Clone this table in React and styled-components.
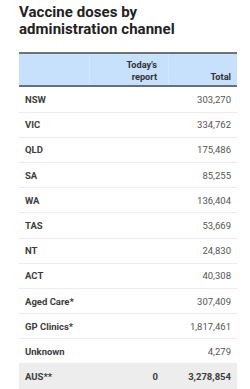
import React from 'react';
import styled, { createGlobalStyle } from 'styled-components';

const GlobalStyle = createGlobalStyle`
  html, body {
    margin: 0;
    padding: 0;
    background: #ffffff;
    font-family: Roboto, "Liberation Sans", sans-serif;
  }
`;

const rows = [
  { label: 'NSW', today: '', total: '303,270' },
  { label: 'VIC', today: '', total: '334,762' },
  { label: 'QLD', today: '', total: '175,486' },
  { label: 'SA', today: '', total: '85,255' },
  { label: 'WA', today: '', total: '136,404' },
  { label: 'TAS', today: '', total: '53,669' },
  { label: 'NT', today: '', total: '24,830' },
  { label: 'ACT', today: '', total: '40,308' },
  { label: 'Aged Care*', today: '', total: '307,409' },
  { label: 'GP Clinics*', today: '', total: '1,817,461' },
  { label: 'Unknown', today: '', total: '4,279' },
];

const Page = styled.div`
  width: 250px;
  height: 389px;
  overflow: hidden;
  padding: 4px 13px 0 19px;
  box-sizing: border-box;
`;

const Title = styled.h2`
  margin: 0 0 15px 0;
  font-size: 15px;
  line-height: 16.7px;
  font-weight: 700;
  color: #222;
  letter-spacing: 0.05px;
`;

const Table = styled.div`
  display: flex;
  flex-direction: column;
  width: 218px;
`;

const HeaderRow = styled.div`
  display: grid;
  grid-template-columns: 71px 79px 68px;
  height: 35px;
  box-sizing: border-box;
  border-top: 2px solid #6f7378;
  border-bottom: 2px solid #66707a;
  background: #c7e1fc;
`;

const HeadCell = styled.div`
  display: flex;
  align-items: flex-end;
  justify-content: flex-end;
  text-align: right;
  padding: 0 ${p => p.$pr || 6}px 3px 6px;
  font-size: 9.2px;
  line-height: 11.5px;
  font-weight: 700;
  color: #333;
  border-right: ${p => (p.$last ? 'none' : '1px solid #d3e7fc')};
`;

const Row = styled.div`
  display: grid;
  grid-template-columns: 71px 79px 68px;
  align-items: center;
  height: 25.2px;
  box-sizing: border-box;
  border-bottom: 1px solid ${p => (p.$total ? 'transparent' : '#ececec')};
  background: ${p => (p.$total ? '#ededed' : 'transparent')};
`;

const Label = styled.div`
  padding-left: 6px;
  font-size: 9.5px;
  font-weight: 700;
  color: #3d3d3d;
  white-space: nowrap;
`;

const Num = styled.div`
  text-align: right;
  padding-right: ${p => p.$pr}px;
  font-size: 9.5px;
  font-weight: ${p => (p.$bold ? 700 : 400)};
  color: ${p => (p.$bold ? '#3d3d3d' : '#555')};
`;

export default function App() {
  return (
    <Page>
      <GlobalStyle />
      <Title>
        Vaccine doses by
        <br />
        administration channel
      </Title>
      <Table>
        <HeaderRow>
          <HeadCell />
          <HeadCell $pr={11}>
            Today's
            <br />
            report
          </HeadCell>
          <HeadCell $last>Total</HeadCell>
        </HeaderRow>
        {rows.map(r => (
          <Row key={r.label}>
            <Label>{r.label}</Label>
            <Num $pr={11}>{r.today}</Num>
            <Num $pr={6}>{r.total}</Num>
          </Row>
        ))}
        <Row $total>
          <Label>AUS**</Label>
          <Num $pr={11} $bold>0</Num>
          <Num $pr={6} $bold>3,278,854</Num>
        </Row>
      </Table>
    </Page>
  );
}
